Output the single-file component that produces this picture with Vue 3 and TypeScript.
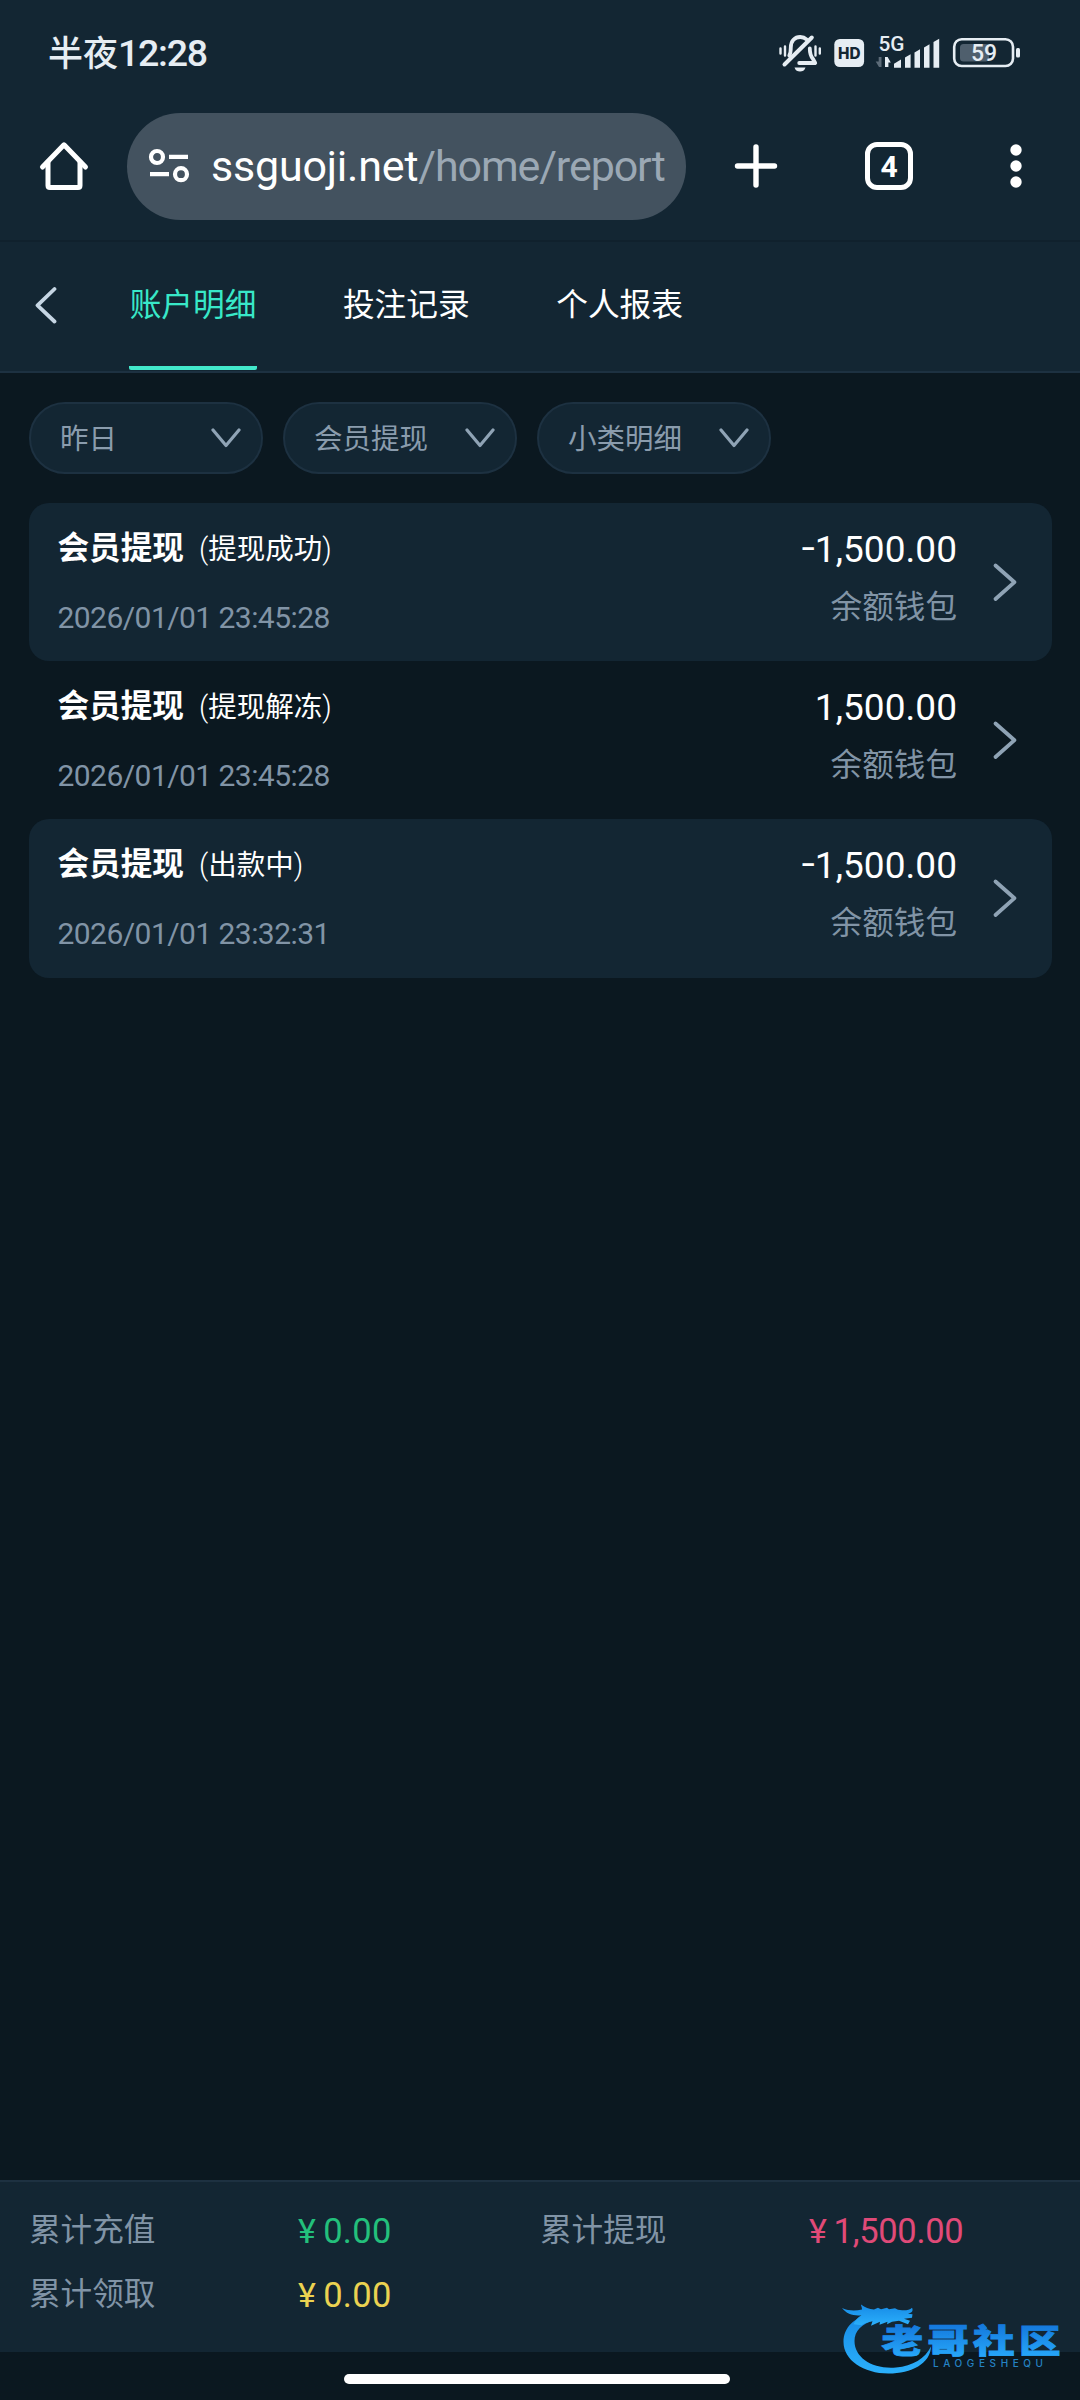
<script setup lang="ts">
interface RecordItem {
  title: string
  status: string
  time: string
  amount: string
  wallet: string
}

interface SummaryItem {
  label: string
  value: string
  tone: string
}

const tabs: string[] = ['账户明细', '投注记录', '个人报表']
const filters: string[] = ['昨日', '会员提现', '小类明细']

const records: RecordItem[] = [
  { title: '会员提现', status: '提现成功', time: '2026/01/01 23:45:28', amount: '-1,500.00', wallet: '余额钱包' },
  { title: '会员提现', status: '提现解冻', time: '2026/01/01 23:45:28', amount: '1,500.00', wallet: '余额钱包' },
  { title: '会员提现', status: '出款中', time: '2026/01/01 23:32:31', amount: '-1,500.00', wallet: '余额钱包' },
]

const summary: SummaryItem[] = [
  { label: '累计充值', value: '0.00', tone: 'green' },
  { label: '累计提现', value: '1,500.00', tone: 'red' },
  { label: '累计领取', value: '0.00', tone: 'yellow' },
]
</script>

<template>
  <div class="screen">
    <div class="status-bar">
      <div class="clock">半夜<span class="digits">12:28</span></div>
      <svg class="status-icons" width="250" height="50" viewBox="776 28 250 50">
        <!-- muted bell -->
        <g fill="none" stroke="#e6edf3" stroke-linecap="round" stroke-linejoin="round">
          <path d="M789.300 55.500c1.200-2 1.500-4.500 1.500-8 0-6.500 4-10.500 9.400-10.500 2.600 0 4.700.8 6.300 2.300M809.800 48.500c0 4.500.7 7.500 3.200 10.500l2.200 4h-16" stroke-width="3.800" />
          <path d="M784.500 64.500L811.800 37.500" stroke-width="4" />
          <path d="M780.500 48.500v5M785 46.500v9M815.500 46.500v9M819.800 48.500v5" stroke-width="2.400" />
        </g>
        <path d="M794.500 67.500h11c-1 3-3 4-5.500 4s-4.500-1-5.500-4z" fill="#e6edf3" />
        <!-- HD -->
        <rect x="834.300" y="39" width="29.800" height="28" rx="5.500" fill="#e6edf3" />
        <text x="849.200" y="58.600" text-anchor="middle" font-family="Inter, sans-serif" font-weight="800" font-size="15.500" fill="#132633" textLength="22.500" lengthAdjust="spacingAndGlyphs">HD</text>
        <!-- network -->
        <text x="878.500" y="51.300" font-family="Roboto, sans-serif" font-weight="500" font-size="20" fill="#e6edf3" textLength="26" lengthAdjust="spacingAndGlyphs">5G</text>
        <path d="M881.500 57v10h-2.500l-3.300-5.500h3V57z" fill="#5c6b78" />
        <path d="M885 57h2.600l3.200 5.500h-2.400V67H885z" fill="#e6edf3" />
        <g fill="#e6edf3">
          <path d="M894 67.800v-4l7-4.300v8.300z" />
          <path d="M905 67.800V57.500l5.600-3.200v13.500z" />
          <path d="M914.500 67.800V52.500l5.500-3.200v18.500z" />
          <path d="M924 67.800V47.500l5.500-3.200v23.500z" />
          <path d="M933.500 67.800V42l5.700-3.300v29.100z" />
        </g>
        <!-- battery -->
        <rect x="960" y="44" width="29" height="17.500" rx="3.500" fill="#4f5f6d" />
        <rect x="954.200" y="39.200" width="58.800" height="26.800" rx="7.500" fill="none" stroke="#e6edf3" stroke-width="2.600" />
        <rect x="1016" y="48" width="4" height="9.600" rx="1.500" fill="#e6edf3" />
        <text x="984" y="61.200" text-anchor="middle" font-family="Roboto, sans-serif" font-weight="500" font-size="23" fill="#e6edf3">59</text>
      </svg>
    </div>

    <div class="browser-bar">
      <svg class="home-icon" width="52" height="52" viewBox="0 0 52 52" fill="none" stroke="#fff" stroke-width="5" stroke-linecap="round" stroke-linejoin="round">
        <path d="M4.500 27L26 4.800 47.500 27" />
        <path d="M10 22v23.500q0 2 2 2h28q2 0 2-2V22" />
      </svg>
      <div class="url-pill">
        <svg class="site-icon" width="42" height="36" viewBox="0 0 42 36" fill="none" stroke="#fff" stroke-width="4.200">
          <circle cx="9" cy="9" r="6" />
          <path d="M21 8.800h19M2 26.200h19" />
          <circle cx="33" cy="26.200" r="6" />
        </svg>
        <div class="url"><span class="host">ssguoji.net</span><span class="path">/home/report</span></div>
      </div>
      <svg class="plus-icon" width="44" height="44" viewBox="0 0 44 44" stroke="#fff" stroke-width="5.400" stroke-linecap="round">
        <path d="M22 3v38M3.500 22h37" />
      </svg>
      <div class="tab-count">4</div>
      <svg class="menu-icon" width="12" height="44" viewBox="0 0 12 44" fill="#fff">
        <circle cx="6" cy="6" r="5.700" />
        <circle cx="6" cy="22" r="5.700" />
        <circle cx="6" cy="38" r="5.700" />
      </svg>
    </div>

    <nav class="tabs">
      <svg class="back" width="24" height="38" viewBox="0 0 24 38" fill="none" stroke="#c6d6e4" stroke-width="3.800" stroke-linecap="round" stroke-linejoin="round">
        <path d="M20.500 3L3.500 19.300 20.500 35.500" />
      </svg>
      <div v-for="(tab, i) in tabs" :key="tab" class="tab" :class="{ active: i === 0 }">{{ tab }}</div>
    </nav>

    <div class="filters">
      <div v-for="filter in filters" :key="filter" class="chip">
        <span class="chip-text">{{ filter }}</span>
        <svg width="30" height="20" viewBox="0 0 30 20" fill="none" stroke="#8fa3b5" stroke-width="3.200" stroke-linecap="round" stroke-linejoin="round">
          <path d="M2 2l13 15.500L28 2" />
        </svg>
      </div>
    </div>

    <main class="list">
      <div v-for="(item, i) in records" :key="i" class="record" :class="{ shaded: i % 2 === 0 }">
        <div class="info">
          <div class="heading">
            <span class="title">{{ item.title }}</span>
            <span class="status"><span class="paren">(</span>{{ item.status }}<span class="paren">)</span></span>
          </div>
          <div class="time">{{ item.time }}</div>
        </div>
        <div class="money">
          <div class="amount"><i v-if="item.amount.startsWith('-')" class="minus">−</i>{{ item.amount.replace('-', '') }}</div>
          <div class="wallet">{{ item.wallet }}</div>
        </div>
        <svg class="arrow" width="26" height="40" viewBox="0 0 26 40" fill="none" stroke="#8fa3b5" stroke-width="3.800" stroke-linecap="round" stroke-linejoin="round">
          <path d="M3.500 3.500L22.500 20.200 3.500 37" />
        </svg>
      </div>
    </main>

    <footer class="summary">
      <div v-for="item in summary" :key="item.label" class="cell">
        <span class="label">{{ item.label }}</span>
        <span class="value" :class="item.tone"><span class="yen">¥</span>{{ item.value }}</span>
      </div>
    </footer>

    <div class="gesture"><div class="handle"></div></div>

    <svg class="watermark" width="226" height="76" viewBox="0 0 226 76">
      <defs>
        <linearGradient id="dragon" x1="0" y1="0" x2="0" y2="1">
          <stop offset="0" stop-color="#168ae6" />
          <stop offset="1" stop-color="#2bb0fb" />
        </linearGradient>
        <linearGradient id="brand" x1="0" y1="0" x2="0" y2="1">
          <stop offset="0.200" stop-color="#1478dc" />
          <stop offset="0.900" stop-color="#27a8fa" />
        </linearGradient>
      </defs>
      <g fill="url(#dragon)">
        <path d="M30 12C14 15 2.500 25 2.500 40c0 18 20 31.500 45 31.500 23 0 42-10 42.500-27-6 12-18 19.500-35 21C32 67.500 13.500 56 13.500 39c0-10 7-17 20-21z" />
        <path d="M1 6c7 3 13 3 20 1.500 0-2-1-3.500-1-5 4 3 8 4.500 13 5l4-1.800 3 1.500 6-1.500 2 1.500 6-1 3 1.500 4 .500c4 .300 8-.500 10-2.500 1.500 3 0 5-4 6l4.500.500-.500 3.500-8 1 6 2-2 3.500-9-3.500-7 1-5 2.500.500-2.500-8 3 .500-3-9 4 1.500-4.500c-4 .500-8 2-11 4l-8-1c2-4 4-7 8-9-7 1-15-1-19.500-7.200z" />
      </g>
      <text transform="translate(40.500 50.500) scale(1.280 1)" font-family="'Noto Sans CJK SC', sans-serif" font-weight="900" font-size="32.500" letter-spacing="3.300" fill="url(#brand)" stroke="url(#brand)" stroke-width="0.800">老哥社区</text>
      <text x="92" y="64.500" font-family="Inter, 'Liberation Sans', sans-serif" font-weight="500" font-size="10" fill="#2583c4" textLength="110" lengthAdjust="spacing">LAOGESHEQU</text>
    </svg>
  </div>
</template>

<style>
body {
  margin: 0;
  background: #0b1820;
}
</style>

<style scoped>
.screen {
  position: relative;
  display: flex;
  flex-direction: column;
  width: 1080px;
  height: 2400px;
  overflow: hidden;
  background: #0b1820;
  color: #fff;
  font-family: Roboto, 'Noto Sans CJK SC', sans-serif;
}

.status-bar {
  display: flex;
  justify-content: space-between;
  flex: none;
  height: 104px;
  padding: 28px 54px 0 48px;
  box-sizing: border-box;
  background: #132633;
}

.clock {
  height: 50px;
  line-height: 50px;
  font-size: 35px;
  font-weight: 500;
  color: #e6edf3;
  white-space: nowrap;
}

.digits {
  font-size: 37.5px;
  letter-spacing: -1.3px;
}

.browser-bar {
  display: flex;
  align-items: center;
  flex: none;
  height: 138px;
  padding: 0 58px 12px 38px;
  box-sizing: border-box;
  background: #132633;
  border-bottom: 2px solid #10212d;
}

.url-pill {
  display: flex;
  align-items: center;
  width: 559px;
  height: 107px;
  margin-left: 37px;
  padding: 0 21px;
  box-sizing: border-box;
  border-radius: 54px;
  background: #43525f;
}

.site-icon {
  flex: none;
}

.url {
  width: 456px;
  margin-left: 21px;
  overflow: hidden;
  white-space: nowrap;
  font-size: 43px;
  line-height: 60px;
}

.host {
  letter-spacing: -0.2px;
}

.path {
  color: #9ba8b4;
  letter-spacing: -1.1px;
}

.plus-icon {
  margin-left: 48px;
}

.tab-count {
  width: 48px;
  height: 48px;
  margin-left: 87px;
  box-sizing: border-box;
  border: 5px solid #fff;
  border-radius: 12px;
  font-size: 30px;
  font-weight: 700;
  line-height: 39px;
  text-align: center;
}

.menu-icon {
  margin-left: 97px;
}

.tabs {
  display: flex;
  flex: none;
  height: 131px;
  padding-left: 34px;
  box-sizing: border-box;
  border-bottom: 2px solid #1d3141;
  background: #132633;
}

.back {
  margin: 44px 71px 0 0;
}

.tab {
  width: 128px;
  height: 128px;
  margin-right: 85.300px;
  box-sizing: border-box;
  border-bottom: 4px solid transparent;
  border-radius: 2px;
  font-size: 31.7px;
  line-height: 127px;
  text-align: center;
  white-space: nowrap;
}

.tab.active {
  color: #38e8c8;
  border-bottom-color: #42e8cb;
}

.filters {
  display: flex;
  flex: none;
  gap: 20px;
  padding: 29px 0 0 29px;
}

.chip {
  display: flex;
  align-items: center;
  justify-content: space-between;
  width: 234px;
  height: 72px;
  padding: 0 20px 0 29px;
  box-sizing: border-box;
  border: 2px solid #1d3141;
  border-radius: 36px;
  background: #132633;
  color: #8a9cad;
  font-size: 28.500px;
}

.chip-text {
  padding-bottom: 4px;
}

.list {
  flex: 1;
  padding: 28.500px 28px 0 29px;
}

.record {
  display: flex;
  height: 158.400px;
  padding: 0 34px 0 28.500px;
  box-sizing: border-box;
  border-radius: 20px;
}

.record.shaded {
  background: #132633;
}

.info {
  flex: 1;
}

.heading {
  display: flex;
  height: 40px;
  margin-top: 26px;
  line-height: 40px;
  white-space: nowrap;
}

.title {
  font-size: 31.600px;
  font-weight: 700;
}

.status {
  margin-left: 15px;
  font-size: 28.500px;
}

.paren {
  font-size: 29px;
  font-weight: 300;
}

.time {
  height: 40px;
  margin-top: 29px;
  line-height: 40px;
  font-size: 30px;
  letter-spacing: -0.55px;
  color: #8194a6;
}

.money {
  text-align: right;
}

.amount {
  height: 44px;
  margin-top: 25px;
  line-height: 44px;
  font-size: 37px;
  letter-spacing: 0.050px;
}

.minus {
  display: inline-block;
  margin-right: -1px;
  font-style: normal;
  transform: scaleX(0.75);
  transform-origin: right;
}

.wallet {
  height: 40px;
  margin-top: 16px;
  line-height: 40px;
  font-size: 31.600px;
  color: #8194a6;
}

.arrow {
  margin: 59px 0 0 35px;
}

.summary {
  display: grid;
  grid-template-columns: 511px 511px;
  grid-template-rows: 64px 64px;
  flex: none;
  height: 172px;
  padding: 17px 0 0 29px;
  box-sizing: border-box;
  border-top: 2px solid #1d3141;
  background: #132633;
}

.cell {
  display: flex;
  line-height: 64px;
}

.label {
  width: 269px;
  font-size: 31.600px;
  color: #8194a6;
}

.value {
  font-size: 34.500px;
  letter-spacing: 0.3px;
}

.value.red {
  letter-spacing: -0.3px;
}

.yen {
  margin-right: 7px;
  font-size: 34px;
}

.green {
  color: #23c07c;
}

.red {
  color: #e04a78;
}

.yellow {
  color: #ebd251;
}

.gesture {
  display: flex;
  justify-content: center;
  flex: none;
  height: 48px;
  padding-right: 6px;
  box-sizing: border-box;
}

.handle {
  width: 386px;
  height: 10px;
  margin-top: 22px;
  border-radius: 5px;
  background: #fff;
}

/* brand mark floats over the footer */
.watermark {
  position: absolute;
  left: 841px;
  top: 2302px;
}
</style>
